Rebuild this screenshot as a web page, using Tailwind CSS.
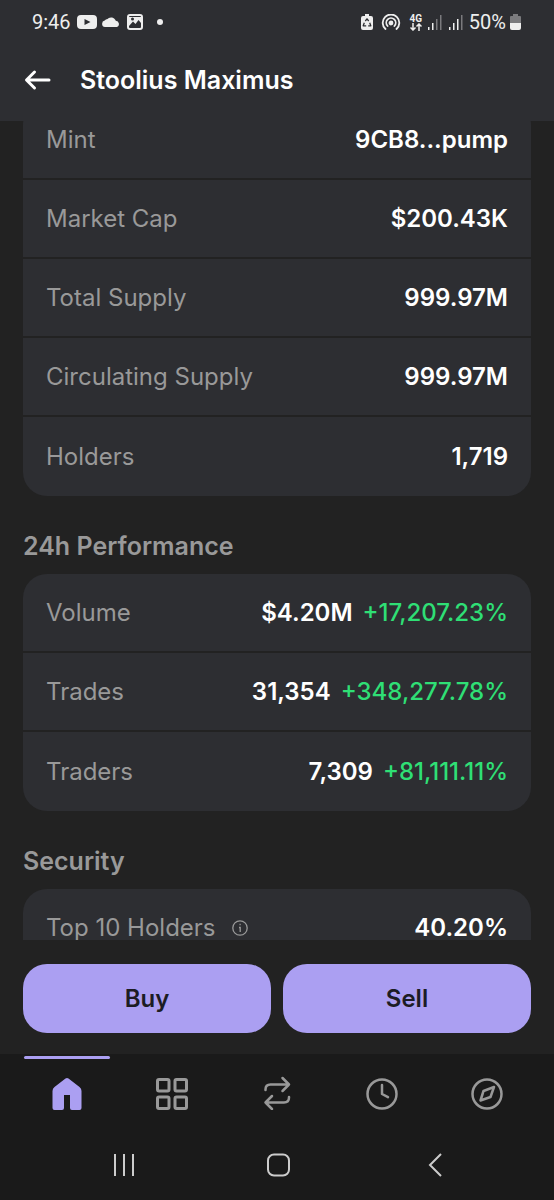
<!DOCTYPE html>
<html lang="en">
<head>
    <meta charset="UTF-8">
    <meta name="viewport" content="width=device-width, initial-scale=1.0">
    <title>Stoolius Maximus</title>
    <script src="https://cdn.jsdelivr.net/npm/@tailwindcss/browser@4"></script>
</head>
<body class="bg-[#222222] text-white font-['Inter',sans-serif] text-2xl leading-8 h-screen flex flex-col">

    <!-- Header -->
    <header class="bg-[#2d2e32] shrink-0 pb-[25px]">
        <!-- Status bar -->
        <div class="flex justify-between items-center h-11 px-8 text-[#eeeeee] font-['Roboto',sans-serif] text-xl">
            <div class="flex items-center">
                <span>9:46</span>
                <svg class="ml-1.5 w-5 h-4" viewBox="0 0 20 16" fill="currentColor" fill-rule="evenodd"><path d="M4 1h12q4 0 4 4v6q0 4-4 4H4q-4 0-4-4V5q0-4 4-4ZM7.500 5v6l6-3Z"/></svg>
                <svg class="ml-1 w-5 h-4" viewBox="0 0 20 16" fill="currentColor"><path d="M4 13a3.300 3.300 0 0 1-.3-6.500A3.500 3.500 0 0 1 6.500 5 5 5 0 0 1 14.800 6.700 3.300 3.300 0 0 1 16 13Z"/></svg>
                <svg class="ml-1.5 w-4 h-4" viewBox="0 0 16 16"><rect x="1" y="1" width="14" height="14" rx="2" fill="#2d2e32" stroke="currentColor" stroke-width="2"/><path d="M2 12 6 7.500 8.500 10 11.500 6 14 9V3H2Z" fill="currentColor"/><circle cx="5.500" cy="5" r="1.500" fill="#2d2e32"/></svg>
                <span class="ml-3.5 w-1.5 h-1.5 rounded-full bg-[#eeeeee]"></span>
            </div>
            <div class="flex items-center">
                <svg class="w-3 h-4" viewBox="0 0 12 16"><path d="M4 0h4v2h2q2 0 2 2v10q0 2-2 2H2q-2 0-2-2V4q0-2 2-2h2Z" fill="currentColor"/><path d="M4.300 7 6 4.800 7.700 7M8.700 8.800 9.800 11.800H7.200M5.200 11.800H2.200L3.300 8.800" fill="none" stroke="#2d2e32" stroke-width="1.300" stroke-linejoin="round"/></svg>
                <svg class="ml-2 w-5 h-4" viewBox="0 0 20 16" fill="none" stroke="currentColor" stroke-width="1.800" stroke-linecap="round"><path d="M4.500 15a8.300 8.300 0 1 1 11 0M6.600 12a4.700 4.700 0 1 1 6.800 0"/><circle cx="10" cy="9" r="1.500" fill="currentColor"/></svg>
                <div class="ml-2 w-3.5 flex flex-col items-center">
                    <span class="text-[10px] leading-[9px] font-bold">4G</span>
                    <svg class="w-3 h-2" viewBox="0 0 12 8" fill="none" stroke="currentColor" stroke-width="1.500"><path d="M3 0v7M.500 4.500 3 7l2.500-2.500M9 8V1M6.500 3.500 9 1l2.500 2.500"/></svg>
                </div>
                <svg class="ml-1 w-4 h-4" viewBox="0 0 16 16" fill="currentColor"><path d="M1 13h1.500v3H1ZM5 9h1.500v7H5Z"/><path d="M9 5h1.500v11H9ZM13 1h1.500v15H13Z" opacity=".4"/></svg>
                <svg class="ml-1.5 w-4 h-4" viewBox="0 0 16 16" fill="currentColor"><path d="M0 13h1.500v3H0ZM4 9h1.500v7H4ZM8 5h1.500v11H8Z"/><path d="M12 1h1.500v15H12Z" opacity=".4"/></svg>
                <span class="ml-1">50%</span>
                <svg class="ml-1 w-3 h-4" viewBox="0 0 12 16" fill="currentColor"><path d="M3 0h5v2h2q1 0 1 1v6H0V3q0-1 1-1h2Z" opacity=".4"/><path d="M0 9h11v5q0 2-2 2H2q-2 0-2-2Z"/></svg>
            </div>
        </div>
        <!-- Title bar -->
        <div class="flex items-center gap-7 pl-6 pt-5">
            <button aria-label="Back">
                <svg class="w-7 h-6" viewBox="0 0 28 24" fill="none" stroke="currentColor" stroke-width="3" stroke-linecap="round" stroke-linejoin="round"><path d="M25 12H3M10.500 4 2.500 12l8 8"/></svg>
            </button>
            <h1 class="text-[25px] leading-8 font-semibold">Stoolius Maximus</h1>
        </div>
    </header>

    <!-- Token info -->
    <main class="flex-1 min-h-0 overflow-hidden px-[23px] text-[#999999]">
        <dl class="-mt-5 bg-[#2d2e32] rounded-3xl">
            <div class="flex items-center justify-between h-[79px] px-[23px] border-b-2 border-[#222222]">
                <dt>Mint</dt>
                <dd class="text-white font-semibold">9CB8...pump</dd>
            </div>
            <div class="flex items-center justify-between h-[79px] px-[23px] border-b-2 border-[#222222]">
                <dt>Market Cap</dt>
                <dd class="text-white font-semibold">$200.43K</dd>
            </div>
            <div class="flex items-center justify-between h-[79px] px-[23px] border-b-2 border-[#222222]">
                <dt>Total Supply</dt>
                <dd class="text-white font-semibold">999.97M</dd>
            </div>
            <div class="flex items-center justify-between h-[79px] px-[23px] border-b-2 border-[#222222]">
                <dt>Circulating Supply</dt>
                <dd class="text-white font-semibold">999.97M</dd>
            </div>
            <div class="flex items-center justify-between h-[79px] px-[23px]">
                <dt>Holders</dt>
                <dd class="text-white font-semibold">1,719</dd>
            </div>
        </dl>

        <h2 class="text-[25px] leading-8 font-semibold mt-[34px] mb-3">24h Performance</h2>
        <dl class="bg-[#2d2e32] rounded-3xl">
            <div class="flex items-center justify-between h-[79px] px-[23px] border-b-2 border-[#222222]">
                <dt>Volume</dt>
                <dd class="flex gap-2.5 text-white font-semibold">$4.20M <span class="text-[#2fdf75] font-medium">+17,207.23%</span></dd>
            </div>
            <div class="flex items-center justify-between h-[79px] px-[23px] border-b-2 border-[#222222]">
                <dt>Trades</dt>
                <dd class="flex gap-2.5 text-white font-semibold">31,354 <span class="text-[#2fdf75] font-medium">+348,277.78%</span></dd>
            </div>
            <div class="flex items-center justify-between h-[79px] px-[23px]">
                <dt>Traders</dt>
                <dd class="flex gap-2.5 text-white font-semibold">7,309 <span class="text-[#2fdf75] font-medium">+81,111.11%</span></dd>
            </div>
        </dl>

        <h2 class="text-[25px] leading-8 font-semibold mt-[34px] mb-3">Security</h2>
        <dl class="bg-[#2d2e32] rounded-3xl">
            <div class="flex items-center justify-between h-[79px] px-[23px] border-b-2 border-[#222222]">
                <dt class="flex items-center gap-4">Top 10 Holders
                    <button aria-label="About top 10 holders">
                        <svg class="w-4 h-4" viewBox="0 0 16 16" fill="none" stroke="currentColor" stroke-width="1.300"><circle cx="8" cy="8" r="7.200"/><path d="M7 7.500h1.200V12M7.500 4.500h1.200"/></svg>
                    </button>
                </dt>
                <dd class="text-white font-semibold">40.20%</dd>
            </div>
        </dl>
    </main>

    <!-- Buy / Sell -->
    <div class="shrink-0 grid grid-cols-2 gap-3 px-[23px] pt-6 pb-[21px] text-[#1c1c24] font-semibold">
        <button class="bg-[#ab9ff2] rounded-3xl h-[69px]">Buy</button>
        <button class="bg-[#ab9ff2] rounded-3xl h-[69px]">Sell</button>
    </div>

    <!-- Tab bar -->
    <nav class="shrink-0 bg-[#1a1a1a] grid grid-cols-5 px-3.5 text-[#999999]">
        <a href="#" aria-label="Home" class="flex flex-col items-center text-[#ab9ff2]">
            <span class="mt-0.5 w-[86px] h-[3px] rounded-full bg-[#ab9ff2]"></span>
            <svg class="mt-[19px] w-8 h-8" viewBox="0 0 32 32" fill="currentColor"><path d="M14.500.5q1.500-1 3 0l11 8.500q2 1.500 2 4v17q0 2-2 2h-7.500q-2 0-2-2V17h-6v13q0 2-2 2H3.500q-2 0-2-2V13q0-2.500 2-4Z"/></svg>
        </a>
        <a href="#" aria-label="Collectibles" class="flex justify-center items-center pt-6">
            <svg class="w-8 h-8" viewBox="0 0 32 32" fill="none" stroke="currentColor" stroke-width="3"><rect x="1.500" y="1.500" width="11.500" height="11.500" rx="1.500"/><rect x="19" y="1.500" width="11.500" height="11.500" rx="1.500"/><rect x="1.500" y="19" width="11.500" height="11.500" rx="1.500"/><rect x="19" y="19" width="11.500" height="11.500" rx="1.500"/></svg>
        </a>
        <a href="#" aria-label="Swap" class="flex justify-center items-center pt-6">
            <svg class="w-8 h-8 overflow-visible" viewBox="0 0 32 32" fill="none" stroke="currentColor" stroke-width="2.500" stroke-linecap="round" stroke-linejoin="round"><path d="M4.500 12v-.5Q4.500 6.500 9.500 6.500H28M21.500 0 28 6.500 21.500 13M28 19v.5q0 5-5 5H4.500M11 18l-6.500 6.500L11 31"/></svg>
        </a>
        <a href="#" aria-label="Activity" class="flex justify-center items-center pt-6">
            <svg class="w-8 h-8" viewBox="0 0 32 32" fill="none" stroke="currentColor" stroke-width="2.500" stroke-linecap="round" stroke-linejoin="round"><circle cx="16" cy="16" r="14.500"/><path d="M16 7v9l6 3.200"/></svg>
        </a>
        <a href="#" aria-label="Explore" class="flex justify-center items-center pt-6">
            <svg class="w-8 h-8" viewBox="0 0 32 32" fill="none" stroke="currentColor" stroke-width="2.500" stroke-linejoin="round"><circle cx="16" cy="16" r="14.500"/><path d="M23 9 12.500 13 9.500 22.500 19.500 19Z"/></svg>
        </a>
    </nav>

    <!-- System navigation -->
    <div class="shrink-0 bg-[#1a1a1a] grid grid-cols-3 pl-[46px] pr-11 pt-[43px] pb-[23px] text-[#cccccc]">
        <button aria-label="Recent apps" class="flex justify-center">
            <svg class="w-6 h-6" viewBox="0 0 24 24" stroke="currentColor" stroke-width="2"><path d="M4 1v22M13 1v22M22 1v22"/></svg>
        </button>
        <button aria-label="Home screen" class="flex justify-center">
            <svg class="w-6 h-6" viewBox="0 0 24 24" fill="none" stroke="currentColor" stroke-width="2"><rect x="2" y="1.500" width="21" height="21" rx="6"/></svg>
        </button>
        <button aria-label="Go back" class="flex justify-center">
            <svg class="w-6 h-6" viewBox="0 0 24 24" fill="none" stroke="currentColor" stroke-width="2"><path d="M20 1 9 12l11 11"/></svg>
        </button>
    </div>

</body>
</html>
